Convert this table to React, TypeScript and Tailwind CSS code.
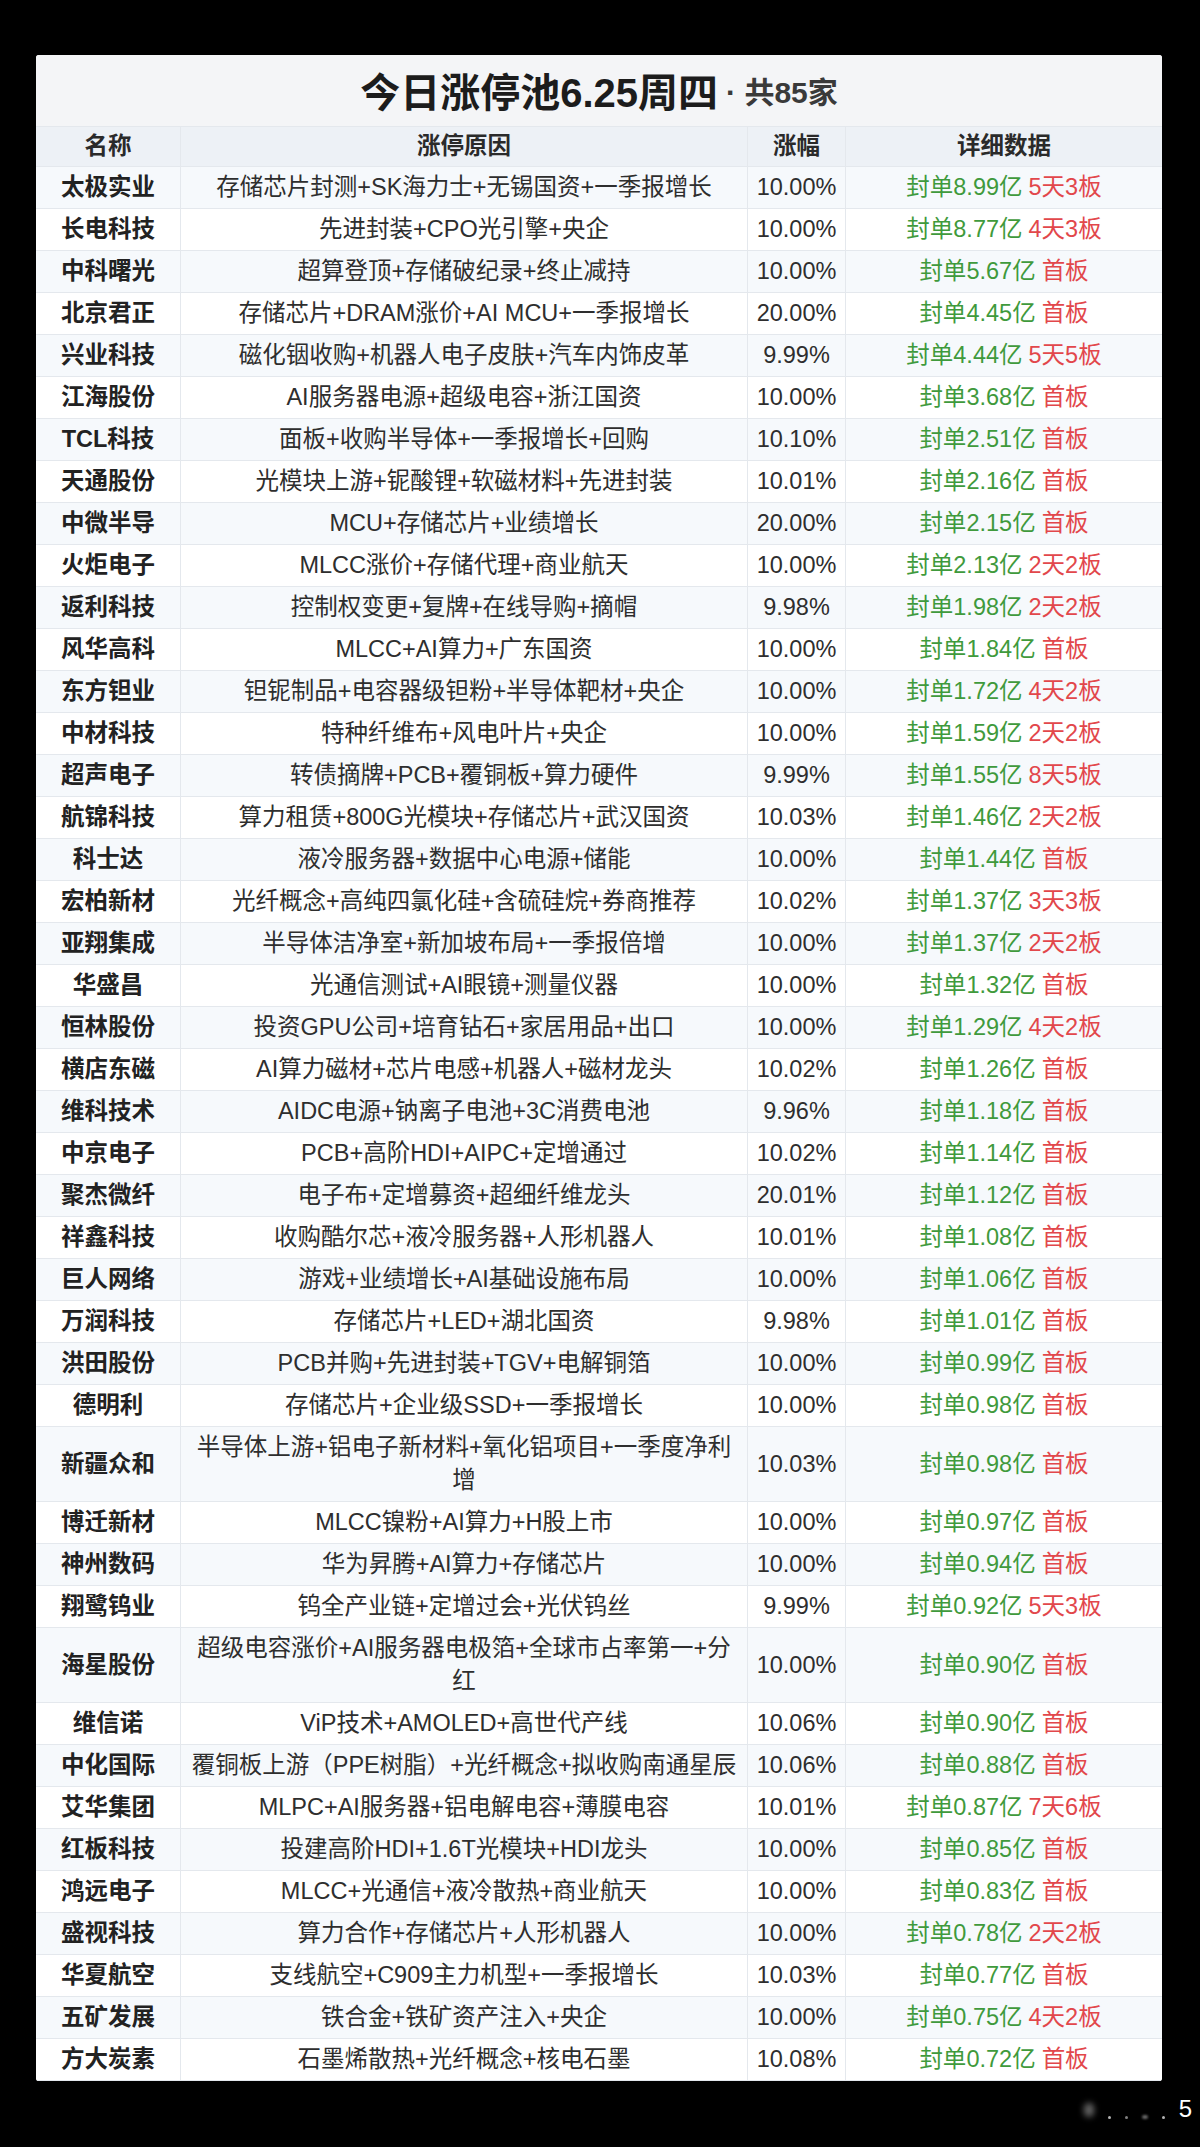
import React from "react";

type Row = [string, string, string, string, string];

// name, reason, pct, seal amount, board status
const rows: Row[] = [
  ["太极实业", "存储芯片封测+SK海力士+无锡国资+一季报增长", "10.00%", "8.99", "5天3板"],
  ["长电科技", "先进封装+CPO光引擎+央企", "10.00%", "8.77", "4天3板"],
  ["中科曙光", "超算登顶+存储破纪录+终止减持", "10.00%", "5.67", "首板"],
  ["北京君正", "存储芯片+DRAM涨价+AI MCU+一季报增长", "20.00%", "4.45", "首板"],
  ["兴业科技", "磁化铟收购+机器人电子皮肤+汽车内饰皮革", "9.99%", "4.44", "5天5板"],
  ["江海股份", "AI服务器电源+超级电容+浙江国资", "10.00%", "3.68", "首板"],
  ["TCL科技", "面板+收购半导体+一季报增长+回购", "10.10%", "2.51", "首板"],
  ["天通股份", "光模块上游+铌酸锂+软磁材料+先进封装", "10.01%", "2.16", "首板"],
  ["中微半导", "MCU+存储芯片+业绩增长", "20.00%", "2.15", "首板"],
  ["火炬电子", "MLCC涨价+存储代理+商业航天", "10.00%", "2.13", "2天2板"],
  ["返利科技", "控制权变更+复牌+在线导购+摘帽", "9.98%", "1.98", "2天2板"],
  ["风华高科", "MLCC+AI算力+广东国资", "10.00%", "1.84", "首板"],
  ["东方钽业", "钽铌制品+电容器级钽粉+半导体靶材+央企", "10.00%", "1.72", "4天2板"],
  ["中材科技", "特种纤维布+风电叶片+央企", "10.00%", "1.59", "2天2板"],
  ["超声电子", "转债摘牌+PCB+覆铜板+算力硬件", "9.99%", "1.55", "8天5板"],
  ["航锦科技", "算力租赁+800G光模块+存储芯片+武汉国资", "10.03%", "1.46", "2天2板"],
  ["科士达", "液冷服务器+数据中心电源+储能", "10.00%", "1.44", "首板"],
  ["宏柏新材", "光纤概念+高纯四氯化硅+含硫硅烷+券商推荐", "10.02%", "1.37", "3天3板"],
  ["亚翔集成", "半导体洁净室+新加坡布局+一季报倍增", "10.00%", "1.37", "2天2板"],
  ["华盛昌", "光通信测试+AI眼镜+测量仪器", "10.00%", "1.32", "首板"],
  ["恒林股份", "投资GPU公司+培育钻石+家居用品+出口", "10.00%", "1.29", "4天2板"],
  ["横店东磁", "AI算力磁材+芯片电感+机器人+磁材龙头", "10.02%", "1.26", "首板"],
  ["维科技术", "AIDC电源+钠离子电池+3C消费电池", "9.96%", "1.18", "首板"],
  ["中京电子", "PCB+高阶HDI+AIPC+定增通过", "10.02%", "1.14", "首板"],
  ["聚杰微纤", "电子布+定增募资+超细纤维龙头", "20.01%", "1.12", "首板"],
  ["祥鑫科技", "收购酷尔芯+液冷服务器+人形机器人", "10.01%", "1.08", "首板"],
  ["巨人网络", "游戏+业绩增长+AI基础设施布局", "10.00%", "1.06", "首板"],
  ["万润科技", "存储芯片+LED+湖北国资", "9.98%", "1.01", "首板"],
  ["洪田股份", "PCB并购+先进封装+TGV+电解铜箔", "10.00%", "0.99", "首板"],
  ["德明利", "存储芯片+企业级SSD+一季报增长", "10.00%", "0.98", "首板"],
  ["新疆众和", "半导体上游+铝电子新材料+氧化铝项目+一季度净利增", "10.03%", "0.98", "首板"],
  ["博迁新材", "MLCC镍粉+AI算力+H股上市", "10.00%", "0.97", "首板"],
  ["神州数码", "华为昇腾+AI算力+存储芯片", "10.00%", "0.94", "首板"],
  ["翔鹭钨业", "钨全产业链+定增过会+光伏钨丝", "9.99%", "0.92", "5天3板"],
  ["海星股份", "超级电容涨价+AI服务器电极箔+全球市占率第一+分红", "10.00%", "0.90", "首板"],
  ["维信诺", "ViP技术+AMOLED+高世代产线", "10.06%", "0.90", "首板"],
  ["中化国际", "覆铜板上游（PPE树脂）+光纤概念+拟收购南通星辰", "10.06%", "0.88", "首板"],
  ["艾华集团", "MLPC+AI服务器+铝电解电容+薄膜电容", "10.01%", "0.87", "7天6板"],
  ["红板科技", "投建高阶HDI+1.6T光模块+HDI龙头", "10.00%", "0.85", "首板"],
  ["鸿远电子", "MLCC+光通信+液冷散热+商业航天", "10.00%", "0.83", "首板"],
  ["盛视科技", "算力合作+存储芯片+人形机器人", "10.00%", "0.78", "2天2板"],
  ["华夏航空", "支线航空+C909主力机型+一季报增长", "10.03%", "0.77", "首板"],
  ["五矿发展", "铁合金+铁矿资产注入+央企", "10.00%", "0.75", "4天2板"],
  ["方大炭素", "石墨烯散热+光纤概念+核电石墨", "10.08%", "0.72", "首板"],
];

const cols = "grid grid-cols-[145px_567px_98px_316px]";
const cell = "flex items-center justify-center text-center border-r border-[#e4e8ed] py-1 leading-[33px]";

export default function App() {
  return (
    <div className="relative h-[2147px] w-[1200px] overflow-hidden bg-black pt-[55px] font-['Liberation_Sans','Noto_Sans_CJK_SC',sans-serif] text-[23.5px]">
      <div className="ml-[36px] w-[1126px] overflow-hidden rounded-[3px] bg-white">
        {/* title */}
        <div className="flex h-[72px] items-center justify-center border-b border-[#e4e8ed] bg-[#f4f5f7] pt-[4px]">
          <span className="text-[40px] font-bold text-[#1c1c1c]">今日涨停池6.25周四</span>
          <span className="ml-2 text-[30px] font-bold text-[#3a3a3a]">· 共85家</span>
        </div>

        {/* header */}
        <div className={`${cols} border-b border-[#e4e8ed] bg-[#edf1f6] font-bold text-[#2a2a2a]`}>
          <div className={`${cell} py-[3px]`}>名称</div>
          <div className={`${cell} py-[3px]`}>涨停原因</div>
          <div className={`${cell} py-[3px]`}>涨幅</div>
          <div className={`${cell} border-r-0 py-[3px]`}>详细数据</div>
        </div>

        {rows.map(([name, reason, pct, seal, board], i) => (
          <div
            key={name}
            className={`${cols} border-b border-[#e4e8ed] ${i % 2 === 0 ? "bg-[#f6f9fc]" : "bg-white"}`}
          >
            <div className={`${cell} font-bold text-[#222]`}>{name}</div>
            <div className={`${cell} px-[10px] text-[#2e2e2e]`}>{reason}</div>
            <div className={`${cell} text-[#2e2e2e]`}>{pct}</div>
            <div className={`${cell} border-r-0`}>
              <span className="text-[#3f9a3c]">封单{seal}亿</span>
              <span className="ml-[6px] text-[#e2474b]">{board}</span>
            </div>
          </div>
        ))}
      </div>

      {/* faint watermark in the corner */}
      <div className="absolute bottom-[26px] right-[8px] flex items-end gap-[14px] text-white">
        <span className="mb-[4px] h-[14px] w-[10px] rounded-full bg-white/40 blur-[3px]" />
        <span className="mb-[2px] h-[3px] w-[3px] rounded-full bg-white/70" />
        <span className="mb-[2px] h-[3px] w-[3px] rounded-full bg-white/50" />
        <span className="mb-[2px] h-[4px] w-[6px] rounded-full bg-white/40 blur-[1px]" />
        <span className="mb-[2px] h-[3px] w-[3px] rounded-full bg-white/70" />
        <span className="text-[24px] leading-none">5</span>
      </div>
    </div>
  );
}
